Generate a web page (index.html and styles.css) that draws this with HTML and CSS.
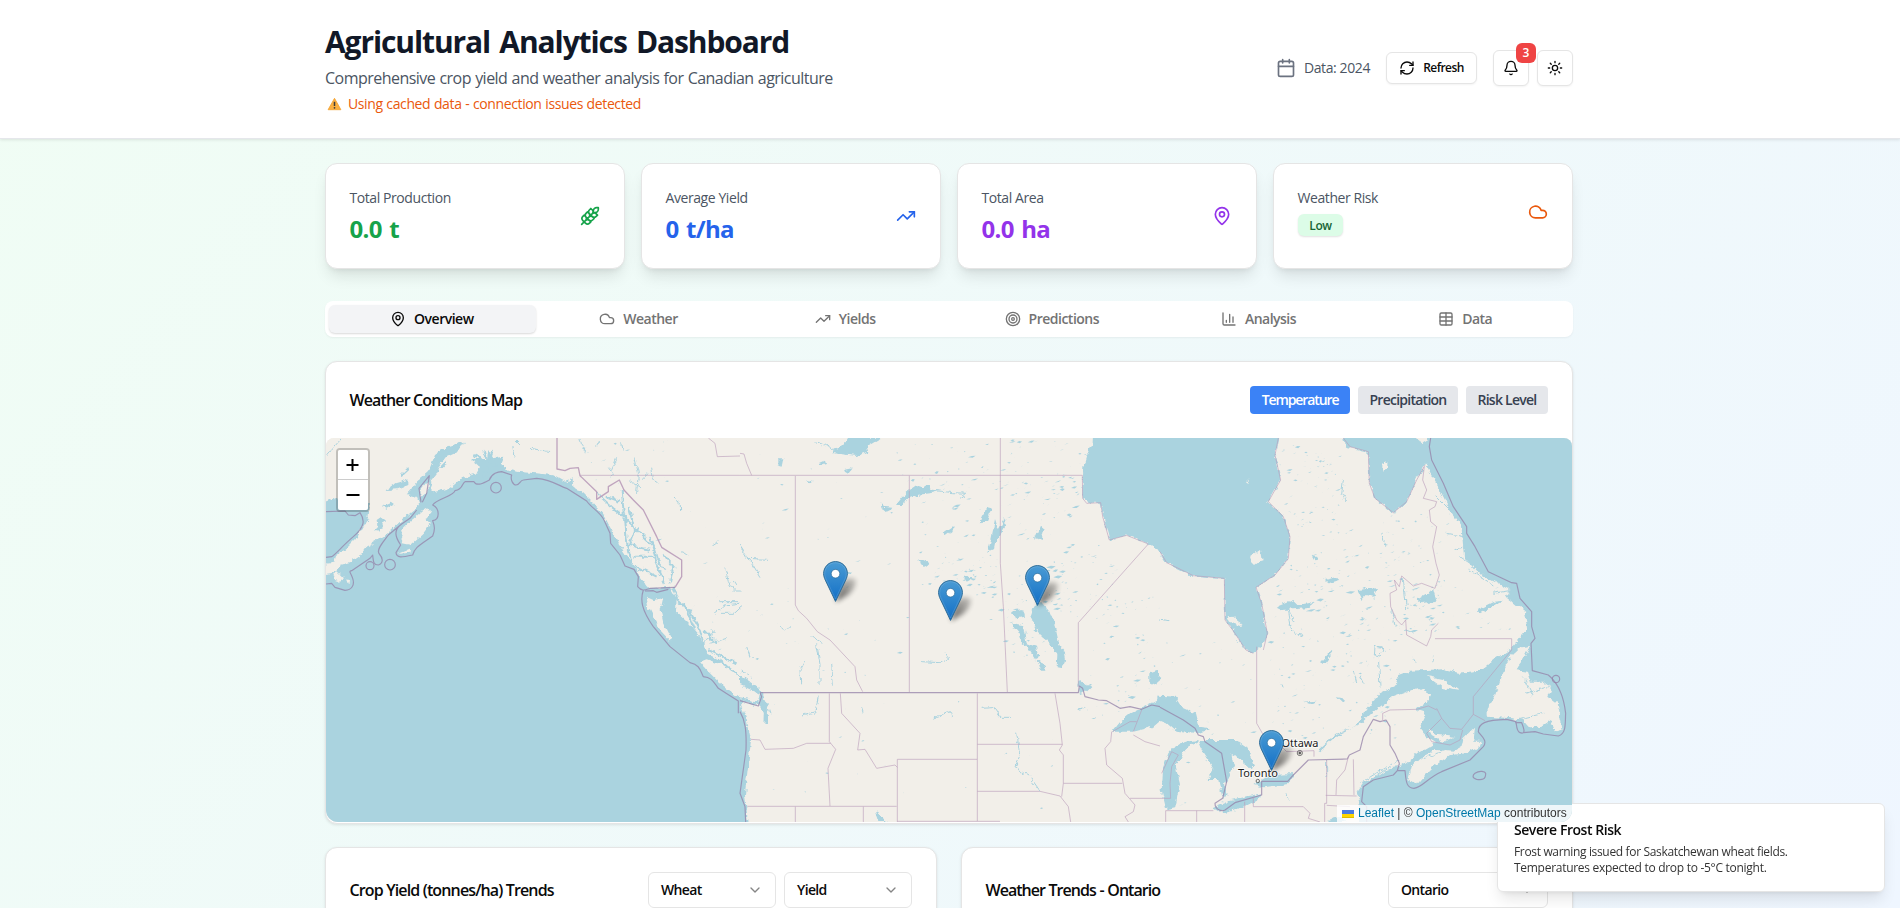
FILE: index.html
```html
<!DOCTYPE html>
<html lang="en">
<head>
<meta charset="utf-8">
<title>Agricultural Analytics Dashboard</title>
<link rel="stylesheet" href="styles.css">
</head>
<body>
<svg class="sprite" aria-hidden="true">
  <symbol id="i-pin" viewBox="0 0 24 24"><path d="M20 10c0 4.993-5.539 10.193-7.399 11.799a1 1 0 0 1-1.202 0C9.539 20.193 4 14.993 4 10a8 8 0 0 1 16 0"/><circle cx="12" cy="10" r="3"/></symbol>
  <symbol id="i-cloud" viewBox="0 0 24 24"><path d="M17.5 19H9a7 7 0 1 1 6.71-9h1.79a4.5 4.5 0 1 1 0 9Z"/></symbol>
  <symbol id="i-trend" viewBox="0 0 24 24"><path d="M22 7l-8.5 8.5-5-5L2 17"/><path d="M16 7h6v6"/></symbol>
  <symbol id="i-chev" viewBox="0 0 24 24"><path d="m6 9 6 6 6-6"/></symbol>
  <symbol id="i-marker" viewBox="0 0 25 41">
    <path class="marker-body" d="M12.5.6C5.9.6.6 6 .6 12.6c0 2.200.8 4.600 1.700 6.500L12.500 40.400l10.200-21.300c.9-1.900 1.700-4.300 1.700-6.500C24.400 6 19.100.6 12.500.6z"/>
    <path class="marker-rim" d="M12.500 1.700c-6 0-10.800 4.900-10.800 10.900 0 2 .7 4.200 1.600 6l9.200 19.300 9.200-19.300c.9-1.800 1.600-4 1.600-6 0-6-4.800-10.900-10.800-10.900z"/>
    <circle class="marker-dot" cx="12.500" cy="12.700" r="4.300"/>
  </symbol>
</svg>

<header class="header">
  <div class="wrap header-row">
    <div class="heading">
      <h1>Agricultural Analytics Dashboard</h1>
      <p class="subtitle">Comprehensive crop yield and weather analysis for Canadian agriculture</p>
      <p class="warning"><svg class="warn-icon" viewBox="0 0 16 16"><path d="M8 1.500 15.300 14.500H.7z" fill="#fbb040" stroke="#f3a536" stroke-linejoin="round"/><path d="M8 5.500v4.800" stroke="#3b3b3b" stroke-width="1.700"/><circle cx="8" cy="12.300" r="1" fill="#3b3b3b"/></svg><span>Using cached data - connection issues detected</span></p>
    </div>
    <div class="actions">
      <div class="data-year">
        <svg class="icon s20" viewBox="0 0 24 24"><path d="M8 2v4M16 2v4M3 10h18"/><rect x="3" y="4" width="18" height="18" rx="2"/></svg>
        <span>Data: 2024</span>
      </div>
      <button class="btn refresh"><svg class="icon s16" viewBox="0 0 24 24"><path d="M3 12a9 9 0 0 1 9-9 9.750 9.750 0 0 1 6.740 2.740L21 8"/><path d="M21 3v5h-5M21 12a9 9 0 0 1-9 9 9.750 9.750 0 0 1-6.740-2.740L3 16"/><path d="M8 16H3v5"/></svg><span>Refresh</span></button>
      <div class="icon-buttons">
        <button class="btn square"><svg class="icon s16" viewBox="0 0 24 24"><path d="M10.268 21a2 2 0 0 0 3.464 0"/><path d="M3.262 15.326A1 1 0 0 0 4 17h16a1 1 0 0 0 .74-1.673C19.410 13.956 18 12.499 18 8A6 6 0 0 0 6 8c0 4.499-1.411 5.956-2.738 7.326"/></svg><span class="count">3</span></button>
        <button class="btn square"><svg class="icon s16" viewBox="0 0 24 24"><circle cx="12" cy="12" r="4"/><path d="M12 2v2M12 20v2M4.930 4.930l1.410 1.410M17.660 17.660l1.410 1.410M2 12h2M20 12h2M6.340 17.660l-1.410 1.410M19.070 4.930l-1.410 1.410"/></svg></button>
      </div>
    </div>
  </div>
</header>

<main class="wrap main">
  <section class="stats">
    <article class="card stat green"><div><p class="label">Total Production</p><p class="value">0.0 t</p></div>
      <svg class="icon s20" viewBox="0 0 24 24"><path d="M2 22 16 8M3.470 12.530 5 11l1.530 1.530a3.500 3.500 0 0 1 0 4.940L5 19l-1.530-1.530a3.500 3.500 0 0 1 0-4.940ZM7.470 8.530 9 7l1.530 1.530a3.500 3.500 0 0 1 0 4.940L9 15l-1.530-1.530a3.500 3.500 0 0 1 0-4.940ZM11.470 4.530 13 3l1.530 1.530a3.500 3.500 0 0 1 0 4.940L13 11l-1.530-1.530a3.500 3.500 0 0 1 0-4.940ZM20 2h2v2a4 4 0 0 1-4 4h-2V6a4 4 0 0 1 4-4ZM11.470 17.470 13 19l-1.530 1.530a3.500 3.500 0 0 1-4.940 0L5 19l1.530-1.530a3.500 3.500 0 0 1 4.940 0ZM15.470 13.470 17 15l-1.530 1.530a3.500 3.500 0 0 1-4.940 0L9 15l1.530-1.530a3.500 3.500 0 0 1 4.940 0ZM19.470 9.470 21 11l-1.530 1.530a3.500 3.500 0 0 1-4.940 0L13 11l1.530-1.530a3.500 3.500 0 0 1 4.940 0Z"/></svg></article>
    <article class="card stat blue"><div><p class="label">Average Yield</p><p class="value">0 t/ha</p></div><svg class="icon s20"><use href="#i-trend"/></svg></article>
    <article class="card stat purple"><div><p class="label">Total Area</p><p class="value">0.0 ha</p></div><svg class="icon s20"><use href="#i-pin"/></svg></article>
    <article class="card stat orange"><div><p class="label">Weather Risk</p><p class="badge">Low</p></div><svg class="icon s20"><use href="#i-cloud"/></svg></article>
  </section>

  <nav class="tabs">
    <button class="tab active"><svg class="icon s16"><use href="#i-pin"/></svg><span>Overview</span></button>
    <button class="tab"><svg class="icon s16"><use href="#i-cloud"/></svg><span>Weather</span></button>
    <button class="tab"><svg class="icon s16"><use href="#i-trend"/></svg><span>Yields</span></button>
    <button class="tab"><svg class="icon s16" viewBox="0 0 24 24"><circle cx="12" cy="12" r="10"/><circle cx="12" cy="12" r="6"/><circle cx="12" cy="12" r="2"/></svg><span>Predictions</span></button>
    <button class="tab"><svg class="icon s16" viewBox="0 0 24 24"><path d="M3 3v16a2 2 0 0 0 2 2h16M18 17V9M13 17V5M8 17v-3"/></svg><span>Analysis</span></button>
    <button class="tab"><svg class="icon s16" viewBox="0 0 24 24"><rect x="3" y="3" width="18" height="18" rx="2"/><path d="M12 3v18M3 9h18M3 15h18"/></svg><span>Data</span></button>
  </nav>

  <section class="card map-card">
    <div class="map-head">
      <h2>Weather Conditions Map</h2>
      <div class="modes"><button class="mode on">Temperature</button><button class="mode">Precipitation</button><button class="mode risk">Risk Level</button></div>
    </div>
    <div class="map">
      <svg class="map-art" viewBox="326 438 1246 384">
        <defs>
          <linearGradient id="markerFill" x1="0" y1="0" x2="0" y2="1"><stop offset="0" stop-color="#4a9bd4"/><stop offset="1" stop-color="#126fc6"/></linearGradient>
          <filter id="rough" x="-5%" y="-5%" width="110%" height="110%"><feTurbulence type="fractalNoise" baseFrequency="0.16" numOctaves="3" seed="4"/><feDisplacementMap in="SourceGraphic" scale="6" xChannelSelector="R" yChannelSelector="G"/></filter>
          <filter id="soft" x="-50%" y="-50%" width="200%" height="200%"><feGaussianBlur stdDeviation="2.600"/></filter>
          <linearGradient id="shadowFade" x1="0" y1="1" x2="1" y2="0"><stop offset="0" stop-color="#000" stop-opacity=".75"/><stop offset="1" stop-color="#000" stop-opacity=".2"/></linearGradient>
        </defs>
        <rect x="326" y="438" width="1246" height="384" fill="#f2efe9"/>
        <g id="lakes" class="water"></g>

        <g filter="url(#rough)">
          <!-- Alaska and the British Columbia coast -->
          <g transform="translate(320 430) scale(.33333)">
            <path class="water" d="M0 222 50 200 60 225 150 220 145 265 130 290 110 325 80 355 48 378 42 398 0 405ZM0 435 50 425 62 405 95 395 120 378 140 350 190 322 240 275 285 240 297 220 290 200 262 192 290 155 325 125 345 75 380 50 420 38 432 35 415 62 380 78 355 110 350 130 330 155 340 190 380 180 402 165 420 148 470 130 480 110 462 95 480 82 500 92 505 60 520 85 550 80 540 105 560 118 590 125 650 130 700 136 735 155 758 148 760 170 790 190 815 215 850 255 868 290 900 340 925 385 950 415 960 440 985 475 1050 470 1070 505 1068 545 1105 580 1140 620 1162 672 1200 690 1260 735 1275 760 1262 830 1262 1200 0 1200Z"/>
            <path class="water" d="M200 180 210 165 262 150 262 165 230 178ZM240 135 268 108 270 115 245 138ZM170 270 182 262 198 275 190 280 175 305 163 303 172 285ZM185 228 215 215 225 222 200 236ZM360 110 380 90 382 98 365 118Z"/>
            <path class="land" d="M240 305 270 275 310 240 325 232 335 250 320 265 332 280 310 310 270 345 245 340 250 320ZM18 400 45 405 35 430 18 430ZM40 432 60 430 75 445 60 455 45 450ZM80 445 90 450 88 465ZM300 205 302 180 325 150 322 185ZM235 372 270 358 268 368ZM978 500 1000 510 1030 505 1022 540 1030 575 1052 620 1050 632 1020 600 1000 560 985 530ZM1140 695 1160 688 1200 702 1260 740 1300 780 1285 815 1262 805 1220 775 1190 750 1155 715ZM870 260 900 255 912 290 925 330 922 380 895 340 880 300ZM940 345 965 335 975 375 955 365ZM955 395 985 400 1000 440 990 470 970 440ZM1000 400 1020 430 1010 465 1000 440ZM935 285 955 270 960 310 945 305Z"/>
            <path class="river wide" d="M830 190 880 235 915 260 920 330 935 400M905 180 912 260 960 310 1000 350 1010 385 1040 425M925 230 945 300 930 345 990 360M940 380 1000 380 1035 460M950 410 1010 440M860 200 900 215M1030 370 1060 410 1050 460M990 320 1005 355M1070 510 1110 545 1140 600 1160 680M1100 540 1125 600M1150 600 1190 640M1110 560 1090 520M1060 470 1075 510M1165 660 1250 700M455 90 540 90M490 60 510 120M460 75 530 110M520 60 490 140M545 110 590 140"/>
            <path class="river" d="M780 24 785 45 798 65M840 30 830 50M905 40 910 65M865 110 880 130 875 145M890 85 875 120M945 85 955 130 950 190M925 150 960 170M995 110 1000 150 1015 160M985 130 965 150M1060 200 1080 215 1082 240M1215 415 1225 455 1240 480 1262 480M1240 450 1250 465M1195 515 1260 515M1185 550 1215 525 1260 520M1200 550 1240 550 1262 530M1180 345 1195 335M1085 365 1105 372M1145 650 1180 600M1170 640 1220 625M600 45 585 30M585 80 578 45M630 55 690 65M18 80 60 30"/>
          </g>
          <!-- Prairies, Pacific Northwest and western Hudson Bay -->
          <g transform="translate(740 430) scale(.33333)">
            <path class="water" d="M1060 0 1058 40 1040 75 1030 110 1027 190 1040 218 1082 218 1090 260 1108 330 1160 316 1190 325 1225 342 1270 368 1270 0ZM0 735 50 768 70 785 70 800 85 830 82 880 70 885 72 840 60 828 0 810ZM-5 805 0 820 20 870 33 930 25 1000 15 1090 25 1200-5 1200Z"/>
            <path class="land" d="M0 765 40 782 60 790 55 815 0 805Z"/>
            <path class="water" d="M275 65 310 45 325 20 430 20 380 50 385 65 350 78 300 72ZM468 225 500 185 530 165 550 172 560 165 575 180 600 182 570 190 530 195 500 205 490 225ZM425 220 435 228 460 230 455 238 440 245 428 235ZM735 230 755 235 742 275 722 280ZM765 270 775 300 795 265 797 285 770 330 765 355 742 372 755 320ZM608 310 640 288 640 300 620 315ZM872 560 885 522 920 525 938 570 948 600 958 645 970 660 975 690 965 715 950 712 952 672 938 650 920 632 905 620 890 600 880 575ZM812 545 850 540 855 560 830 565ZM815 580 848 585 860 640 888 650 895 680 885 685 862 648 845 637 838 605ZM890 690 915 705 912 722 900 722ZM1228 730 1250 722 1258 745 1245 768 1228 760ZM1015 765 1020 750 1040 765 1055 770 1040 785 1020 792ZM1117 905 1145 870 1170 850 1215 828 1270 800 1270 865 1240 890 1180 905ZM405 1145 420 1155 440 1176 415 1176ZM535 385 550 390 570 400 560 410 540 400ZM670 445 690 440 700 445 680 455ZM900 290 912 300 905 330 885 325ZM320 425 340 428 335 436ZM310 120 335 115 325 128ZM238 100 255 92 258 102 245 106ZM115 85 130 85 125 110 115 105ZM198 150 218 152 212 160ZM1010 840 1035 830 1020 845Z"/>
            <path class="river" d="M0 345 30 390 60 440M0 350 20 385 85 388M570 180 640 188 680 190 660 205M120 585 130 600 150 590M215 620 250 640M230 640 240 700 240 765M195 690 180 720 182 760M275 700 280 770M580 865 610 855 632 845 635 860M725 835 760 833 780 862 810 862M830 905 840 980 825 1010 870 1040 900 1083M770 840 780 860M545 695 600 698 625 680 615 668M365 835 370 850M190 855 225 845 235 800M60 810 80 870M80 820 90 850M5 720 35 745M20 650 30 680M230 35 290 62"/>
          </g>
          <!-- Eastern Canada -->
          <g transform="translate(1160 430) scale(.33333)">
            <path class="water" d="M-5 0H360L345 75 362 150 325 215 370 260 390 320 385 385 345 435 288 472 305 520 322 610 305 650 280 670 258 660 218 600 195 570 193 445 100 437 20 398-5 362ZM545 0 555 50 625 65 628 160 645 205 700 248 740 215 770 150 795 100 808 125 840 180 870 240 905 295 912 380 955 430 1050 480 1040 500 1095 545 1102 600 1055 655 1000 690 960 722 895 728 850 718 750 722 715 735 700 770 660 790 620 838 590 885 535 915 478 966 475 962 530 911 600 883 640 845 700 800 770 775 810 795 805 815 770 840 800 850 780 895 800 920 830 938 775 970 720 1010 690 1015 660 1035 610 1060 590 1090 600 1125 600 1200 1250 1200 1250 0Z"/>
            <path class="land" d="M765 20 800 20 792 40ZM670 100 685 95 685 110 670 122ZM200 562 220 560 248 582 240 588 205 575ZM800 738 850 748 897 782 850 775ZM1110 648 1088 690 1065 720 1100 725 1110 755 1150 755 1175 775 1165 800 1190 820 1200 870 1205 900 1185 905 1170 870 1140 890 1110 892 1090 870 1060 865 980 860 980 840 1005 800 1025 740 1050 680 1080 652ZM945 890 940 935 965 935 960 948 925 970 870 975 820 1010 795 1035 770 1065 745 1050 755 1010 780 985 830 960 880 965 905 950 910 925ZM805 895 830 915 885 920 850 935 815 915ZM270 380 300 360 305 390 285 405 275 395ZM255 160 268 148 262 165Z"/>
            <path class="water" d="M-5 800 50 803 70 835 105 850 115 890 150 895 110 912 50 905 20 880-5 870ZM45 945 75 935 115 930 110 938 78 955 65 985 45 1000 60 1060 45 1135 20 1140 5 1080 10 1010 25 970ZM115 930 150 930 230 930 260 950 285 1005 270 1015 235 985 215 975 222 1010 195 1060 200 1095 188 1110 175 1050 140 1050 160 1010 130 965ZM160 1132 210 1110 305 1090 300 1105 230 1140 190 1150ZM280 1065 330 1035 405 1032 385 1062 310 1072ZM350 530 400 510 415 525 465 515 440 535 370 540ZM590 480 650 475 640 500 620 495 605 510ZM770 510 820 480 830 515 785 522ZM480 700 515 660 520 665 490 705ZM530 802 552 805 548 818ZM430 815 470 812 450 822ZM950 540 1000 515 1030 512 960 550ZM495 450 535 440 540 450 505 460ZM455 375 470 378 465 392ZM500 1170 540 1160 560 1176 510 1176Z"/>
            <path class="river" d="M405 575 385 540 395 600 425 620M645 650 643 675 660 678 672 665 665 645 645 650M655 680 660 770M550 150 545 190 555 210M580 720 590 760M600 740 610 760M665 310 680 350M730 450 740 540M1000 490 1060 480M930 420 1000 465M900 380 960 420M830 200 870 240M860 310 910 320M880 360 915 350M600 1060 680 1010M620 1060 715 990M780 990 900 945M500 990 500 1040M375 1090 385 1105M1090 740 1120 800M1095 790 1165 770M1070 870 1150 850M735 600 760 610M695 540 705 590M0 570 25 575M760 680 765 695M820 680 822 700M360 760 370 775"/>
          </g>
        </g>

        <!-- Maritime boundaries and national borders -->
        <g class="border strong">
          <g transform="translate(320 430) scale(.33333)">
            <path d="M18 245 75 243 85 255 105 257 120 248C135 270 135 290 100 320S45 375 35 380L18 382M18 462 35 460 45 472 75 481C95 480 105 465 98 445S85 425 95 422L150 385 158 375C160 395 160 405 175 405 190 400 190 385 178 372S195 330 205 315L245 282C220 300 225 320 242 345L228 368C230 385 245 382 278 375 285 350 300 345 338 318 345 300 345 290 338 272 360 270 360 235 338 225 350 205 400 200 405 182 430 178 425 160 435 155L462 155C470 170 490 160 508 150 515 130 535 125 545 125L575 135C570 150 580 165 588 165 600 165 600 150 610 150L650 145C700 150 720 170 740 175L800 213C815 235 840 245 852 270L870 310 872 340 900 375 915 408 942 418 955 440 953 470C965 485 975 480 990 475L1065 472M970 480C960 510 965 540 1000 590L1050 650 1110 698C1140 705 1140 720 1150 740 1175 742 1180 755 1195 775L1255 813V850M975 483 1000 482 1010 487 1045 478M303 217 297 175 328 137 320 190 307 217M245 282 270 265 290 240"/>
            <circle cx="528" cy="173" r="16"/><circle cx="210" cy="404" r="16"/><circle cx="150" cy="407" r="12"/>
          </g>
          <g transform="translate(740 430) scale(.33333)">
            <path d="M60 788H1015L1018 768 1028 775 1035 800 1075 810 1100 812 1140 835 1170 830 1205 838 1235 825 1260 830M60 788 65 800 55 828 0 812M0 845C15 870 20 900 18 960L0 1090 15 1130 17 1176"/>
          </g>
          <g transform="translate(1160 430) scale(.33333)">
            <path d="M0 832 70 870 105 895 115 915 130 920 135 935 185 970 200 1055 188 1105 165 1120C165 1140 185 1145 195 1140L225 1118 305 1095V1054L383 1054 400 1035 445 990 562 987 568 975 600 960 610 920 640 868 660 875 678 870 690 890V945L705 970 718 1000 712 1022 735 1022C738 1050 738 1075 762 1075 790 1070 800 1045 845 1025L930 990 970 950C985 930 960 915 955 905 955 880 975 870 1040 868L1068 875C1070 890 1070 905 1080 908 1100 915 1090 890 1085 878L1065 878M1090 908 1125 905 1150 912 1195 918C1220 910 1215 880 1217 850 1210 790 1190 755 1165 735L1117 722 1113 640 1125 625 1115 590 1115 545 1080 505 1070 460 1055 458 985 425 945 350 920 310 920 290 880 230 850 160 815 90 808 50 812 24M712 1022 700 1035 640 1050 610 1070 605 1115 620 1130 620 1176"/>
            <circle cx="1188" cy="747" r="11"/><path d="M945 1030C960 1020 975 1025 977 1030 978 1050 965 1050 950 1048 935 1045 938 1035 945 1030Z"/>
          </g>
        </g>
        <g class="border">
          <g transform="translate(320 430) scale(.33333)"><path class="mid" d="M711 24V117L735 122 750 115 775 113 780 137 830 185V208L865 185V170L898 150 912 180 940 210 970 240 1010 320 1025 352 1085 390 1085 440 1065 472"/><path d="M780 136H1260M1165 24 1185 40 1192 80 1260 78"/></g>
          <g transform="translate(740 430) scale(.33333)">
            <path d="M0 136H1027M0 70 12 72 20 100 35 136M166 138V525L175 542 200 565 232 605 270 630 345 710 350 750 368 785M508 137V786M781 24V400L790 530 802 786M1027 136 1028 205 1040 220 1082 218 1088 260 1108 330 1160 316 1225 342M1225 342 1015 578V770M268 790V935L287 958 264 1015 270 1128M301 790 305 850 360 910 353 960 375 958 410 1015 465 1005 472 1012M33 928 60 930 75 958 160 955 200 940 272 940M22 1129H470M166 1130V1176M370 1130V1176M472 1176V988H712V1174H472M712 790V988M712 943H967M712 1084H900L960 1098 985 1130 992 1176M945 790 960 880 967 945 958 960 970 975V1060M970 1060H1147M1205 840 1180 905M1117 905 1170 875 1190 875M1115 905 1112 935 1095 955 1100 1005 1147 1045 1155 1090 1185 1125 1180 1145 1155 1160 1165 1176M1170 1105H1260M1180 915 1215 935 1260 948M970 1060 965 1100M712 1174H780"/>
          </g>
          <g transform="translate(1160 430) scale(.33333)">
            <path d="M355 24 345 75 362 150 325 215 370 260 390 320 385 385 345 435 288 472 305 520 322 610 310 660M193 445 100 437 20 398 0 365M195 570 193 447M195 570 218 600 258 660 280 670M550 24 570 50 625 65 628 160 645 205 700 248 740 215 770 150 795 105M793 110 788 150 800 180 790 205 830 215 825 230 808 240 812 275 830 290 818 350 828 400 838 435 825 475 785 460 760 468 725 438 718 470 703 450 710 480 690 490 692 530 710 570 725 585 737 570 740 615 800 648 812 620 815 600 835 580M825 626H1055V660L940 800V853M940 853 975 872M940 853 905 898 870 895 845 865 800 910 815 935 870 945 900 930 908 900M830 835 845 865M668 870V850L690 840 770 838 805 828 830 840M290 650V880L310 915 370 955 380 965 462 962V980M500 988V1120H494V1176M565 980 555 1020 530 1050 528 1095M580 988 582 1095M497 1096 590 1098M500 1126 570 1130M280 1100V1130H430L450 1150 445 1165 480 1176M254 1115V1176M110 1142V1176M17 1142H160M17 1142V1176M0 1105H32L30 1060 35 1010 55 975 35 965 5 1030"/>
          </g>
        </g>

        <!-- City labels -->
        <g class="city">
          <circle cx="1299.800" cy="753" r="2.600"/><circle class="core" cx="1299.800" cy="753" r="1"/>
          <circle cx="1257.800" cy="781" r="1.700"/>
          <text x="1281.500" y="746.800" textLength="37">Ottawa</text>
          <text x="1238" y="777" textLength="40">Toronto</text>
        </g>

        <!-- Station markers -->
        <g class="shadows" filter="url(#soft)">
          <path id="shadow" d="M835.500 602 841 584Q848 575 856 580 856 588 848 595Z"/>
          <use href="#shadow" x="115" y="19"/><use href="#shadow" x="202" y="4"/><use href="#shadow" x="436" y="169"/>
        </g>
        <use href="#i-marker" x="823" y="561" width="25" height="41"/>
        <use href="#i-marker" x="938" y="580" width="25" height="41"/>
        <use href="#i-marker" x="1025" y="565" width="25" height="41"/>
        <use href="#i-marker" x="1259" y="730" width="25" height="41"/>
      </svg>
      <div class="zoom-control">
        <button><svg viewBox="0 0 30 30"><path d="M8.500 15h12M14.500 9v12"/></svg></button>
        <button><svg viewBox="0 0 30 30"><path d="M8.500 15h13"/></svg></button>
      </div>
      <div class="attribution"><svg class="flag" viewBox="0 0 12 8"><path fill="#4C7BE1" d="M0 0h12v4H0z"/><path fill="#FFD500" d="M0 4h12v3H0z"/><path fill="#E0BC00" d="M0 7h12v1H0z"/></svg><span><a>Leaflet</a> | © <a>OpenStreetMap</a> contributors</span></div>
    </div>
  </section>

  <section class="charts">
    <article class="card chart"><h2>Crop Yield (tonnes/ha) Trends</h2>
      <div class="selects"><button class="select"><span>Wheat</span><svg class="icon s16"><use href="#i-chev"/></svg></button><button class="select"><span>Yield</span><svg class="icon s16"><use href="#i-chev"/></svg></button></div>
    </article>
    <article class="card chart"><h2 class="t-weather">Weather Trends - Ontario</h2>
      <div class="selects"><button class="select wide-select"><span>Ontario</span><svg class="icon s16"><use href="#i-chev"/></svg></button></div>
    </article>
  </section>
</main>

<aside class="toast">
  <p class="toast-title">Severe Frost Risk</p>
  <p class="toast-text">Frost warning issued for Saskatchewan wheat fields.<br><span>Temperatures expected to drop to -5°C tonight.</span></p>
</aside>
<script src="map.js"></script>
</body>
</html>
```
FILE: styles.css
```css
* { box-sizing: border-box; }
html { height: 100%; overflow: hidden; }
body { margin: 0; height: 100%; overflow: hidden; font-family: "Open Sans", "Noto Sans", sans-serif; font-size: 14px; line-height: 20px; color: #0a0a0a; background: linear-gradient(130deg, #f0fdf4, #eff6ff); }
h1, h2, p { margin: 0; }
button { font: inherit; color: inherit; margin: 0; padding: 0; border: 0; background: none; }
.sprite { position: absolute; width: 0; height: 0; }
.icon { fill: none; stroke: currentColor; stroke-width: 2; stroke-linecap: round; stroke-linejoin: round; flex: none; }
.s20 { width: 20px; height: 20px; }
.s16 { width: 16px; height: 16px; }
.wrap { width: 1248px; margin-left: 325px; }

.header { height: 139px; background: #fff; border-bottom: 1px solid #e5e7eb; box-shadow: 0 1px 3px rgba(0,0,0,.1); padding-top: 24px; }
.header-row { display: flex; justify-content: space-between; }
.heading { height: 90px; white-space: nowrap; }
h1 { font-size: 30px; line-height: 35px; font-weight: 700; color: #111827; letter-spacing: -1.1px; word-spacing: 2.5px; }
.subtitle { margin-top: 7px; font-size: 16px; line-height: 24px; color: #4b5563; letter-spacing: -.53px; word-spacing: .6px; }
.warning { display: flex; align-items: center; gap: 6px; margin-top: 3px; padding-left: 2px; line-height: 22px; color: #ea580c; letter-spacing: -.38px; word-spacing: .4px; }
.warn-icon { width: 15px; height: 14px; fill: none; }
.actions { display: flex; align-items: center; gap: 16px; height: 88px; }
.data-year { display: flex; align-items: center; gap: 8px; color: #4b5563; letter-spacing: -.4px; }
.data-year .icon { color: #6b7280; }
.btn { display: flex; align-items: center; justify-content: center; border: 1px solid #e5e5e5; border-radius: 6px; background: #fff; box-shadow: 0 1px 2px rgba(0,0,0,.05); }
.refresh { width: 91px; height: 32px; gap: 8px; font-size: 12px; font-weight: 600; letter-spacing: -.55px; }
.icon-buttons { display: flex; gap: 8px; }
.square { position: relative; width: 36px; height: 36px; }
.count { position: absolute; top: -8px; right: -8px; width: 20px; height: 20px; border-radius: 6px; background: #ef4444; color: #fff; font-size: 12px; font-weight: 600; }

.main { padding-top: 24px; }
.card { background: #fff; border: 1px solid #e5e5e5; border-radius: 12px; }
.stats { display: grid; grid-template-columns: repeat(4, 1fr); gap: 16px; }
.stat { display: flex; justify-content: space-between; height: 106px; padding: 24px; box-shadow: 0 10px 15px -3px rgba(0,0,0,.1), 0 4px 6px -4px rgba(0,0,0,.1); }
.stat .icon { margin-top: 18px; }
.stat.orange .icon { margin-top: 14px; }
.label { margin-left: -.5px; color: #4b5563; letter-spacing: -.42px; }
.value { margin: 5px 0 0 -.5px; font-size: 24px; line-height: 32px; font-weight: 700; letter-spacing: -.7px; word-spacing: 2px; }
.green .value, .green .icon { color: #16a34a; }
.blue .value, .blue .icon { color: #2563eb; }
.purple .value, .purple .icon { color: #9333ea; }
.orange .icon { color: #ea580c; }
.badge { width: 45px; height: 22px; margin-top: 6px; border-radius: 6px; background: #dcfce7; box-shadow: 0 1px 2px rgba(0,0,0,.12); color: #166534; text-align: center; font-size: 12px; line-height: 23px; font-weight: 600; letter-spacing: -.4px; }

.tabs { display: grid; grid-template-columns: repeat(6, 1fr); height: 36px; margin-top: 32px; padding: 4px; border-radius: 8px; background: #fff; box-shadow: 0 1px 2px rgba(0,0,0,.05); }
.tab { display: flex; align-items: center; justify-content: center; gap: 8px; border-radius: 6px; color: #737373; font-weight: 600; letter-spacing: -.5px; }
.tab svg { margin-left: -1px; }
.tab.active { background: #f3f4f6; color: #0a0a0a; box-shadow: 0 1px 2px rgba(0,0,0,.15); }

.map-card { margin-top: 24px; height: 463px; box-shadow: 0 1px 3px rgba(0,0,0,.1); }
.map-head { display: flex; align-items: center; justify-content: space-between; height: 76px; padding: 0 24px; }
h2 { margin-left: -.5px; font-size: 16px; line-height: 24px; font-weight: 600; white-space: nowrap; letter-spacing: -.86px; }
.t-weather { letter-spacing: -.98px; word-spacing: .5px; }
.modes { display: flex; gap: 8px; }
.mode { width: 100px; height: 28px; border-radius: 4px; background: #e5e7eb; color: #374151; font-weight: 600; letter-spacing: -.75px; }
.mode.on { background: #3b82f6; color: #fff; letter-spacing: -1.1px; }
.mode.risk { width: 82px; }
.map { position: relative; z-index: 10; height: 384px; border-radius: 8px 8px 12px 12px; overflow: hidden; background: #f2efe9; }
.map-art { display: block; width: 1246px; height: 384px; }
.water { fill: #aad3df; }
.land { fill: #f2efe9; }
.river { fill: none; stroke: #aad3df; stroke-width: 3; }
.river.wide { stroke-width: 6; }
.border { fill: none; stroke: #b99bb9; stroke-opacity: .6; stroke-width: 3; stroke-linejoin: round; }
.border .mid { stroke-opacity: .9; stroke-width: 4; }
.border.strong { stroke: #9481a8; stroke-opacity: .75; stroke-width: 3.5; }
.city { fill: none; stroke: #555; stroke-width: .8; }
.city .core { fill: #444; }
.city text { font: 11px "Noto Sans", sans-serif; fill: #222; stroke: #fff; stroke-width: 2px; stroke-opacity: .7; paint-order: stroke; }
.marker-body { fill: url(#markerFill); stroke: #2e6c97; stroke-width: 1; }
.marker-rim { fill: none; stroke: #fff; stroke-opacity: .12; }
.marker-dot { fill: #fff; stroke: #2e6c97; stroke-width: .7; }
.shadows { fill: url(#shadowFade); opacity: .85; }
.zoom-control { position: absolute; top: 10px; left: 10px; width: 34px; height: 64px; border: 2px solid rgba(0,0,0,.2); background-clip: padding-box; border-radius: 4px; }
.zoom-control button { display: block; width: 30px; height: 30px; background: #fff; }
.zoom-control button:first-child { border-bottom: 1px solid #ccc; border-radius: 2px 2px 0 0; }
.zoom-control button:last-child { border-radius: 0 0 2px 2px; }
.zoom-control svg { display: block; width: 30px; height: 30px; fill: none; stroke: #000; stroke-width: 2; }
.attribution { position: absolute; right: 0; bottom: 0; display: flex; align-items: center; gap: 4px; width: 235px; height: 17px; padding-left: 5px; background: rgba(255,255,255,.8); color: #333; font: 12px/17px "Liberation Sans", Arial, sans-serif; white-space: nowrap; }
.attribution a { color: #0078a8; }
.flag { width: 12px; height: 8px; }

.charts { display: grid; grid-template-columns: repeat(2, 1fr); gap: 24px; margin-top: 23px; }
.chart { display: flex; justify-content: space-between; height: 400px; padding: 24px; box-shadow: 0 1px 3px rgba(0,0,0,.1); }
.chart h2 { line-height: 36px; }
.selects { display: flex; gap: 8px; }
.select { display: flex; align-items: center; justify-content: space-between; width: 128px; height: 36px; padding: 0 12px; border: 1px solid #e5e5e5; border-radius: 6px; background: #fff; font-weight: 600; letter-spacing: -.65px; }
.select .icon { color: #858585; }
.wide-select { width: 160px; }

.toast { position: fixed; right: 15px; bottom: 16px; z-index: 5; width: 388px; height: 89px; padding: 16px; border: 1px solid #e5e5e5; border-radius: 6px; background: #fff; box-shadow: 0 10px 15px -3px rgba(0,0,0,.1), 0 4px 6px -4px rgba(0,0,0,.1); white-space: nowrap; }
.toast-title { font-weight: 600; letter-spacing: -.45px; }
.toast-text { margin-top: 4px; font-size: 12px; line-height: 16px; color: #333; letter-spacing: -.34px; }
.toast-text span { letter-spacing: -.28px; }
```
FILE: map.js
```js
// Scatter of small lakes: [x, y, width, height, count, largest radius]
const fields = [
  [900, 440, 190, 60, 75, 2.4], [910, 500, 90, 90, 32, 2.6], [935, 555, 60, 45, 45, 2.2],
  [1000, 470, 80, 70, 45, 2.4], [985, 560, 95, 60, 60, 2.4], [1005, 600, 50, 60, 40, 2.2],
  [750, 445, 150, 100, 20, 2], [780, 560, 140, 120, 20, 1.5], [745, 600, 60, 80, 12, 1.5],
  [1060, 545, 60, 40, 25, 2], [1085, 590, 75, 130, 80, 2.2], [1160, 640, 95, 100, 30, 1.8],
  [1280, 445, 60, 85, 80, 2], [1285, 530, 110, 60, 50, 2], [1275, 585, 110, 55, 70, 2.4],
  [1270, 640, 130, 100, 90, 1.9], [1380, 510, 70, 60, 40, 1.8], [1395, 575, 50, 60, 55, 2.2],
  [1450, 560, 60, 70, 25, 1.8], [560, 440, 110, 50, 14, 1.8], [640, 500, 100, 150, 16, 1.5],
  [760, 700, 150, 110, 12, 1.5], [950, 700, 150, 110, 8, 1.5], [1170, 745, 60, 60, 10, 1.5]
];
let seed = 71;
const rnd = () => (seed = (seed * 16807) % 2147483647) / 2147483647;
let d = "";
for (const [x, y, w, h, n, r] of fields) {
  for (let i = 0; i < n; i++) {
    const cx = x + rnd() * w, cy = y + rnd() * h, s = 0.4 + rnd() * rnd() * r;
    const a = s * (0.8 + rnd() * 1.4), tilt = (rnd() - 0.6) * 2;
    d += `M${(cx - a).toFixed(1)} ${(cy - tilt).toFixed(1)}l${a.toFixed(1)} ${(-s * 0.7).toFixed(1)} ${a.toFixed(1)} ${tilt.toFixed(1)} ${(-a * 0.8).toFixed(1)} ${s.toFixed(1)}z`;
  }
}
const path = document.createElementNS("http://www.w3.org/2000/svg", "path");
path.setAttribute("d", d);
document.getElementById("lakes").appendChild(path);
```
